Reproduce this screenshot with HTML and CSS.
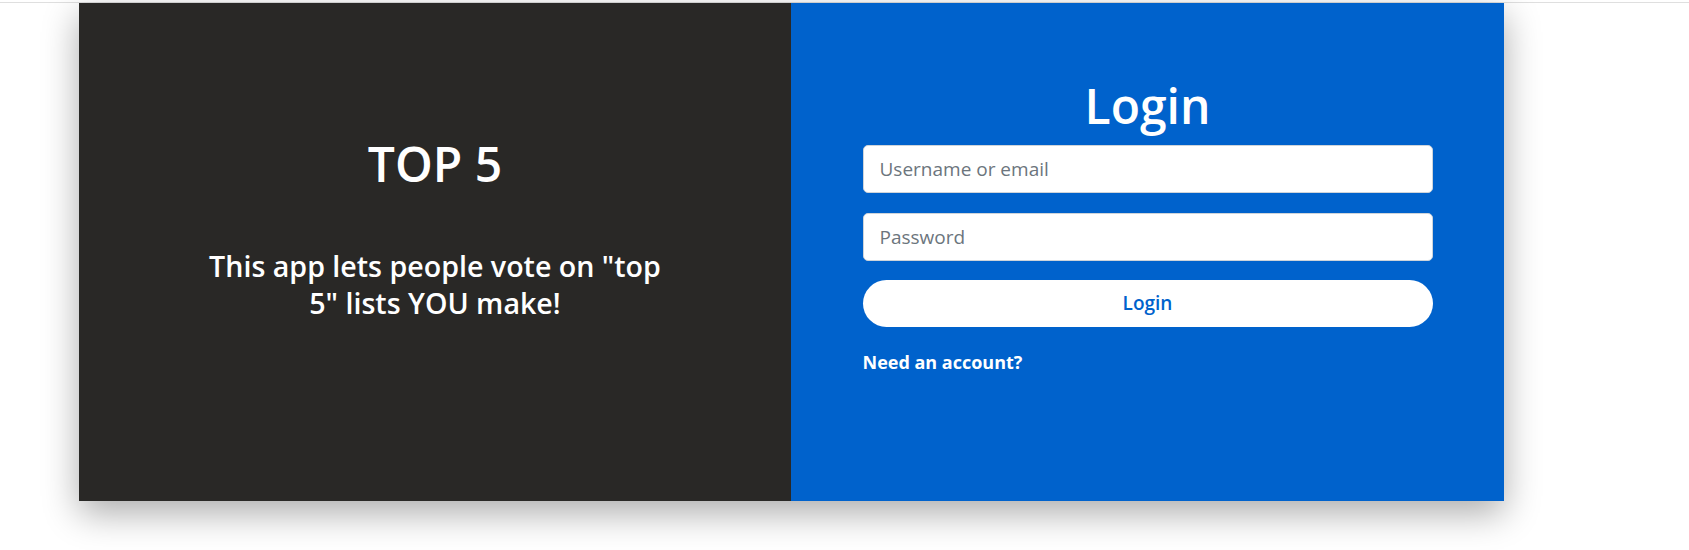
FILE: index.html
```html
<!DOCTYPE html>
<html lang="en">
<head>
<meta charset="utf-8">
<title>Top 5 - Login</title>
<link rel="stylesheet" href="styles.css">
</head>
<body>
<div class="topline"></div>
<main class="card">
  <section class="intro">
    <h1 class="intro-title">TOP 5</h1>
    <p class="intro-text">This app lets people vote on "top 5" lists YOU make!</p>
  </section>
  <section class="login">
    <h1 class="login-title">Login</h1>
    <form class="login-form">
      <input class="field" type="text" placeholder="Username or email">
      <input class="field" type="password" placeholder="Password">
      <button class="login-btn" type="button">Login</button>
    </form>
    <a class="signup-link" href="#">Need an account?</a>
  </section>
</main>
</body>
</html>
```
FILE: styles.css
```css
* { box-sizing: border-box; }

html, body {
  margin: 0;
  padding: 0;
  background: #ffffff;
  font-family: "Open Sans", "Noto Sans", sans-serif;
}

body {
  min-height: 550px;
  padding-bottom: 49px;
}

.topline {
  height: 3px;
  border-bottom: 1px solid #dfdfdf;
}

.card {
  width: 1425px;
  height: 498px;
  margin-left: 79px;
  display: grid;
  grid-template-columns: 712px 713px;
  box-shadow: 0 12px 34px rgba(0, 0, 0, 0.33);
}

.intro {
  background: #292826;
  color: #ffffff;
  text-align: center;
  padding-top: 132px;
}

.intro-title {
  margin: 0;
  font-size: 48px;
  line-height: 57.6px;
  font-weight: 600;
}

.intro-text {
  width: 472px;
  margin: 54px auto 0;
  font-size: 28.6px;
  line-height: 37px;
  font-weight: 600;
}

.login {
  background: #0062cc;
  color: #ffffff;
  padding-top: 74px;
}

.login-title {
  margin: 0;
  text-align: center;
  font-size: 48px;
  line-height: 57.6px;
  font-weight: 600;
}

.login-form {
  width: 570px;
  margin: 10px auto 0;
  display: flex;
  flex-direction: column;
  gap: 20px;
}

.field {
  height: 48px;
  width: 100%;
  padding: 8px 16px;
  border: 1px solid #ced4da;
  border-radius: 5px;
  background: #ffffff;
  font-family: inherit;
  font-size: 19px;
  color: #495057;
}

.field::placeholder {
  color: #6c757d;
}

.login-btn {
  height: 47px;
  margin-top: -1px;
  border: none;
  border-radius: 24px;
  background: #ffffff;
  color: #0062cc;
  font-family: inherit;
  font-size: 19px;
  font-weight: 600;
}

.signup-link {
  display: block;
  width: 570px;
  margin: 22px auto 0;
  color: #ffffff;
  text-decoration: none;
  font-size: 18px;
  line-height: 27px;
  font-weight: 700;
}
```
